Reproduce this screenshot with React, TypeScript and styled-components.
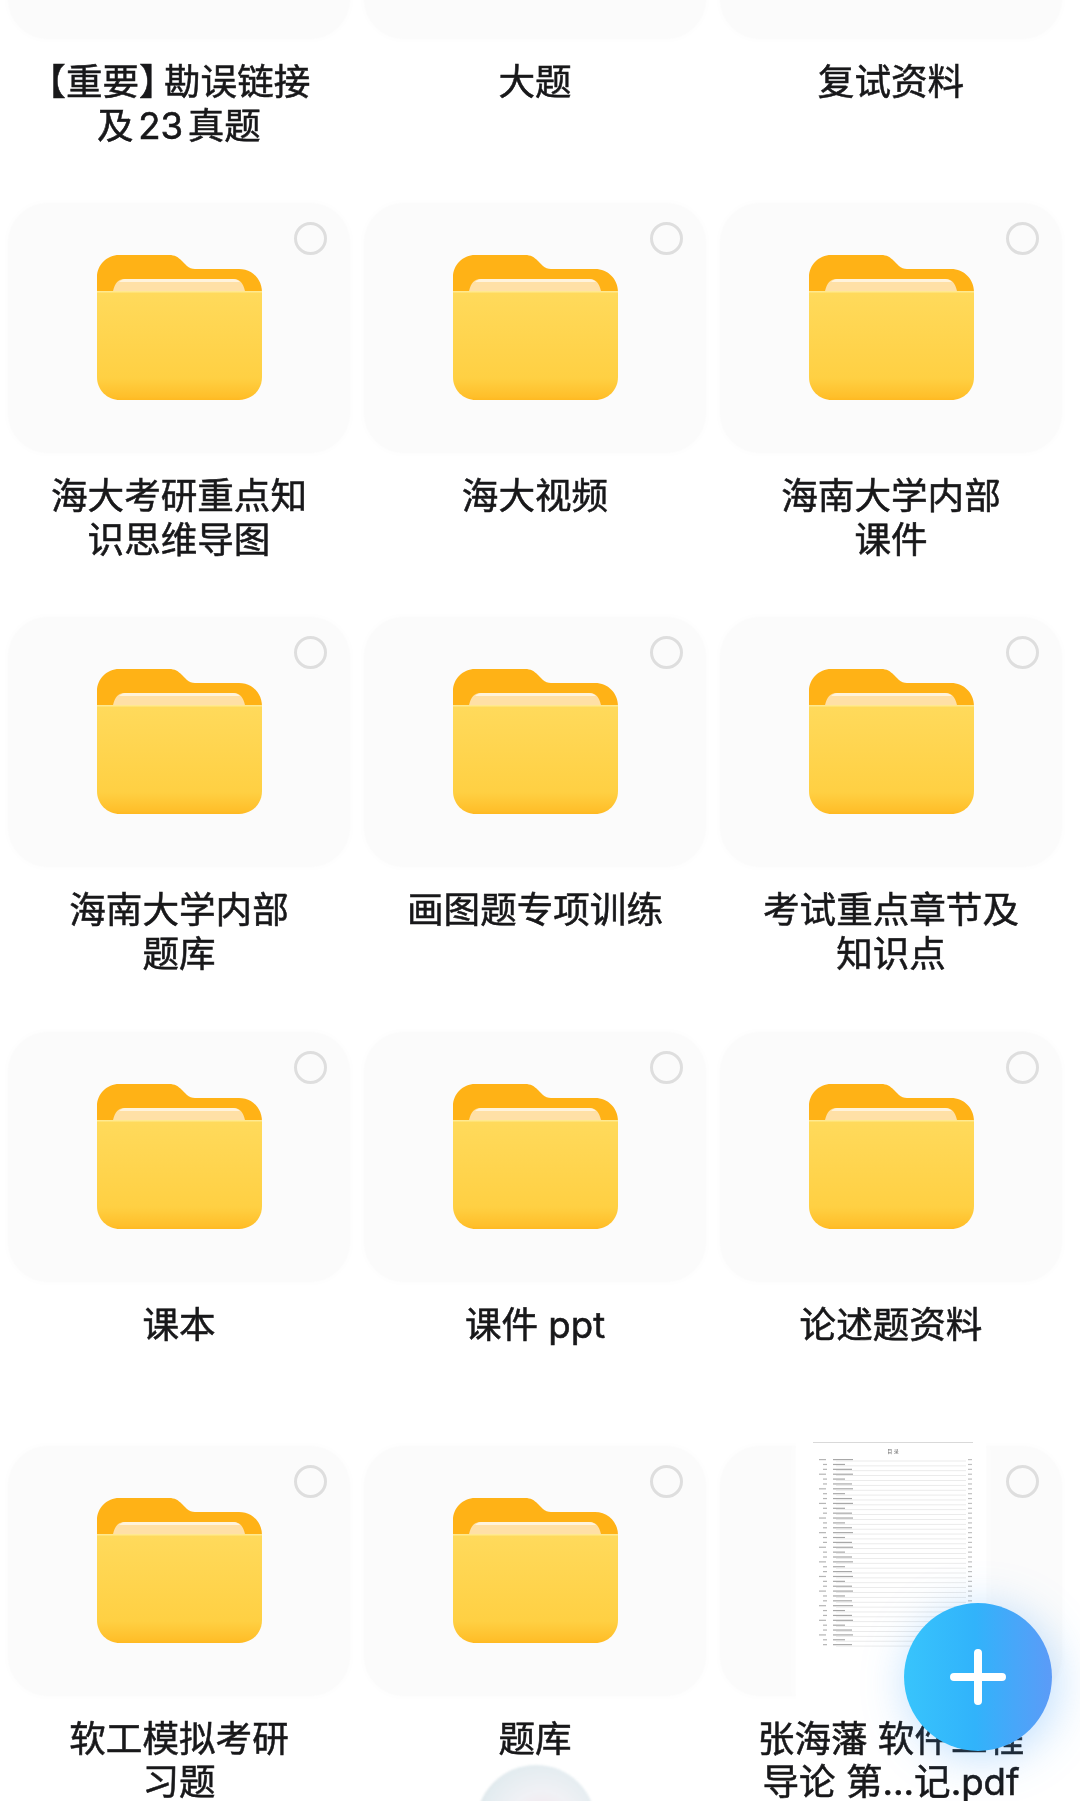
import styled, { createGlobalStyle } from "styled-components";

const GlobalStyle = createGlobalStyle`
  html, body {
    margin: 0;
    padding: 0;
    background: #fff;
  }
`;

const Screen = styled.div`
  position: relative;
  width: 1080px;
  height: 1801px;
  overflow: hidden;
  background: #fff;
  font-family: Inter, "Noto Sans CJK SC", sans-serif;
`;

// the list is scrolled, so the first row starts above the top edge
const FileGrid = styled.div`
  display: grid;
  grid-template-columns: repeat(3, 342px);
  grid-auto-rows: 414.2px;
  column-gap: 14px;
  margin-top: -211px;
  padding-left: 8px;
`;

const FileItem = styled.div`
  display: flex;
  flex-direction: column;
  align-items: center;
`;

const Tile = styled.div`
  position: relative;
  display: flex;
  align-items: center;
  justify-content: center;
  width: 100%;
  height: 250px;
  flex-shrink: 0;
  border-radius: 40px;
  background: #fbfbfb;
  box-shadow: 0 0 7px 1px #fcfcfc;
`;

const SelectCircle = styled.span`
  position: absolute;
  top: 19px;
  right: 23px;
  box-sizing: border-box;
  width: 33px;
  height: 33px;
  border: 3px solid #dedede;
  border-radius: 50%;
  filter: blur(0.6px);
`;

const FolderArt = styled.svg`
  width: 165px;
  height: 146px;
  filter: blur(0.7px);
`;

const ThumbArt = styled.svg`
  flex-shrink: 0;
  width: 190px;
  height: 258px;
  filter: blur(0.45px) drop-shadow(0 0 6px #fff);
`;

const Label = styled.div`
  margin-top: 22px;
  font-size: 36.6px;
  font-weight: 400;
  line-height: 43.5px;
  color: #18181a;
  text-align: center;
  white-space: pre-line;
  text-autospace: normal;
  font-feature-settings: "halt";
  -webkit-text-stroke: 0.55px #18181a;
  filter: blur(0.55px);
`;

const AddButton = styled.button`
  position: absolute;
  left: 904px;
  top: 1603px;
  display: flex;
  align-items: center;
  justify-content: center;
  width: 148px;
  height: 148px;
  padding: 0;
  border: 0;
  border-radius: 50%;
  background: linear-gradient(90deg, #38c4fc 0%, #31b3fb 48%, #5c9bf7 100%);
  box-shadow: 4px 6px 46px rgba(70, 160, 250, 0.36);
`;

const Bubble = styled.div`
  position: absolute;
  left: 476px;
  top: 1765px;
  width: 120px;
  height: 120px;
  border-radius: 50%;
  background: radial-gradient(
    circle at 55% 50%,
    #f6e3ea 0%,
    #f0f1f5 38%,
    #e3ecf0 68%,
    #cfd2d4 100%
  );
  filter: blur(1.2px);
`;

function FolderIcon() {
  return (
    <FolderArt viewBox="0 0 165 146">
      <defs>
        <linearGradient id="folderFront" x1="0" y1="0" x2="0" y2="1">
          <stop offset="0" stopColor="#ffda5c" />
          <stop offset="0.8" stopColor="#ffd043" />
          <stop offset="0.97" stopColor="#ffbf2a" />
          <stop offset="1" stopColor="#ffb921" />
        </linearGradient>
      </defs>
      <path
        d="M22 0H72C78 0 81 2 85 6L90 11C92 13 95 14 98 14H142C155 14 165 24 165 37V60H0V22C0 10 10 0 22 0Z"
        fill="#ffb216"
      />
      <path
        d="M16 36C18 28 21 24 28 24H136C143 24 146 28 148 36Z"
        fill="#ffe0a6"
      />
      <path d="M22 27C24 25 26 24 28 24H136C139 24 141 25 143 27Z" fill="#fff3dc" />
      <path
        d="M0 36H165V122C165 135 155 145 142 145H23C10 145 0 135 0 122Z"
        fill="url(#folderFront)"
      />
      <rect x="0" y="36" width="165" height="1.5" fill="#ffe98f" />
    </FolderArt>
  );
}

const TOC_ROWS = Array.from({ length: 39 }, (_, i) => i);

function PdfThumbnail() {
  return (
    <ThumbArt viewBox="0 0 190 258">
      <rect width="190" height="258" fill="#fff" />
      <rect x="17" y="0" width="160" height="1" fill="#d9d9d9" />
      <text x="97" y="11" fontSize="5" fill="#666" textAnchor="middle">
        目 录
      </text>
      {TOC_ROWS.map((i) => {
        const y = 17 + i * 4.87;
        const chapter = i % 3 === 0;
        return (
          <g key={i}>
            <rect x={chapter ? 23 : 27} y={y} width={chapter ? 7 : 4} height="1.2" fill="#b5b5b5" />
            <rect
              x="37"
              y={y}
              width={chapter ? 20 : i % 3 === 1 ? 12 : 19}
              height="1.2"
              fill="#a8a8a8"
            />
            <rect x="40" y={y + 1.6} width="130" height="0.8" fill="#e6e6e6" />
            <rect x="172" y={y} width="4" height="1.2" fill="#c0c0c0" />
          </g>
        );
      })}
    </ThumbArt>
  );
}

type FileEntry = { name: string; pdf?: boolean };

const FILES: FileEntry[] = [
  { name: "【重要】\u2009勘误链接\n及23真题" },
  { name: "大题" },
  { name: "复试资料" },
  { name: "海大考研重点知\n识思维导图" },
  { name: "海大视频" },
  { name: "海南大学内部\n课件" },
  { name: "海南大学内部\n题库" },
  { name: "画图题专项训练" },
  { name: "考试重点章节及\n知识点" },
  { name: "课本" },
  { name: "课件 ppt" },
  { name: "论述题资料" },
  { name: "软工模拟考研\n习题" },
  { name: "题库" },
  { name: "张海藩 软件工程\n导论 第...记.pdf", pdf: true },
];

export default function App() {
  return (
    <>
      <GlobalStyle />
      <Screen>
        <FileGrid>
          {FILES.map((file) => (
            <FileItem key={file.name}>
              <Tile>
                {file.pdf ? <PdfThumbnail /> : <FolderIcon />}
                <SelectCircle />
              </Tile>
              <Label>{file.name}</Label>
            </FileItem>
          ))}
        </FileGrid>
        <Bubble />
        <AddButton aria-label="add">
          <svg width="56" height="56" viewBox="0 0 56 56">
            <path
              d="M28 4V52M4 28H52"
              stroke="#fff"
              strokeWidth="8"
              strokeLinecap="round"
              fill="none"
            />
          </svg>
        </AddButton>
      </Screen>
    </>
  );
}
